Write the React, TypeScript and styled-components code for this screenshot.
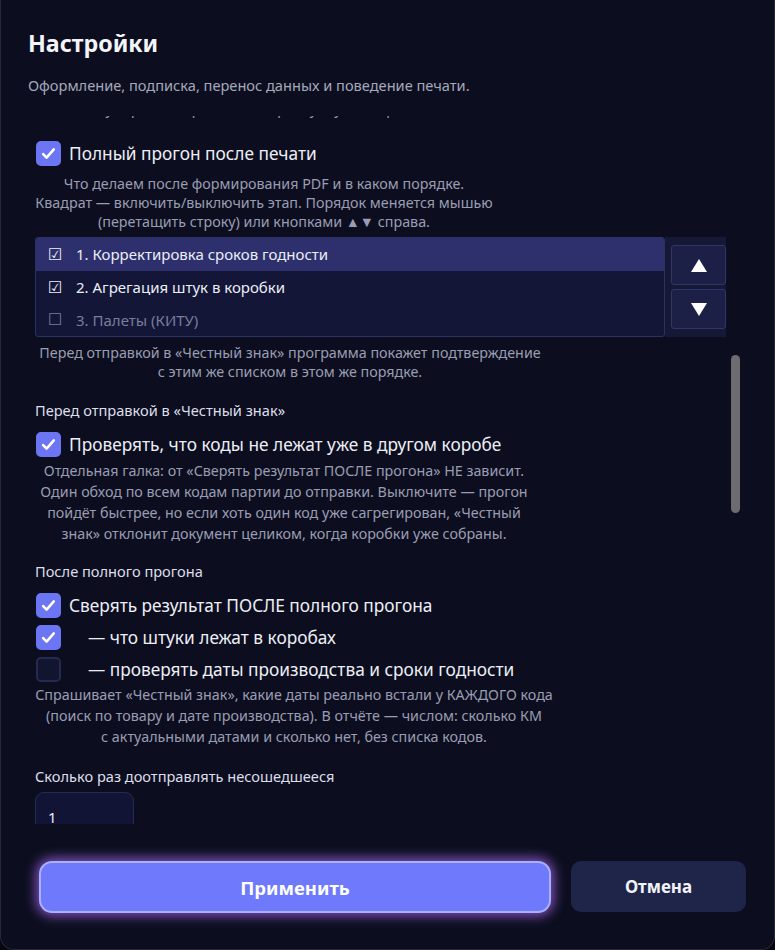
import React, { useLayoutEffect, useRef, useState } from "react";
import styled, { createGlobalStyle } from "styled-components";

const GlobalStyle = createGlobalStyle`
  html, body {
    margin: 0;
    padding: 0;
    background: #07080f;
  }
  * {
    box-sizing: border-box;
  }
`;

const Dialog = styled.div`
  width: 775px;
  height: 950px;
  display: flex;
  flex-direction: column;
  background: #0c0e1f;
  border: 1px solid #252836;
  border-top: none;
  border-radius: 0 0 14px 14px;
  font-family: "Noto Sans", "Open Sans", sans-serif;
  color: #e8eaf3;
`;

const Header = styled.div`
  padding: 27px 28px 0 27px;
`;

const Title = styled.h2`
  margin: 0;
  font-size: 23.2px;
  font-weight: 700;
  line-height: 32px;
  color: #f4f5fb;
`;

const Subtitle = styled.p`
  margin: 16px 0 0;
  font-size: 14.6px;
  line-height: 20px;
  color: #a5a8bb;
`;

const ScrollWrap = styled.div`
  position: relative;
  margin: 21px 33px 0 26px;
  flex: 1;
  min-height: 0;
`;

const Scroll = styled.div`
  height: 100%;
  overflow-y: auto;
  scrollbar-width: none;
  &::-webkit-scrollbar {
    display: none;
  }
`;

const Thumb = styled.div`
  position: absolute;
  right: 1px;
  width: 9px;
  border-radius: 5px;
  background: #6c6c70;
`;

const Content = styled.div`
  min-height: 3164px;
  padding: 0 15px 0 8px;
`;

const Earlier = styled.div`
  min-height: 1070px;
  display: flex;
  flex-direction: column;
  justify-content: flex-end;
  gap: 14px;
`;

const Section = styled.section<{ $top?: number }>`
  display: flex;
  flex-direction: column;
  margin-top: ${(p) => p.$top ?? 0}px;
`;

const SectionTitle = styled.div<{ $top?: number }>`
  margin-top: ${(p) => p.$top ?? 0}px;
  font-size: 14.6px;
  line-height: 20px;
  color: #dcdeea;
`;

const CheckRow = styled.label<{ $top?: number }>`
  display: flex;
  align-items: center;
  gap: 8px;
  margin-top: ${(p) => p.$top ?? 0}px;
  height: 26px;
  font-size: 17.3px;
  color: #eceef6;
  cursor: pointer;
`;

const Box = styled.span<{ $on: boolean }>`
  flex: none;
  width: 25px;
  height: 25px;
  margin-left: 1px;
  border-radius: 5px;
  display: flex;
  align-items: center;
  justify-content: center;
  background: ${(p) => (p.$on ? "#6c75f4" : "#121530")};
  border: 2px solid ${(p) => (p.$on ? "#6c75f4" : "#262a50")};
`;

const Indent = styled.span`
  padding-left: 19px;
`;

const Hint = styled.p<{ $lh: number; $top: number; $w: number }>`
  margin: ${(p) => p.$top}px 0 0;
  max-width: ${(p) => p.$w}px;
  font-size: 14.3px;
  line-height: ${(p) => p.$lh}px;
  color: #9a9db2;
  text-align: center;
`;

const Fragment = styled.p`
  margin: 0;
  font-size: 14px;
  line-height: 20px;
  color: #9a9db2;
  padding-left: 60px;
`;

const StepsFrame = styled.div`
  margin-top: 6px;
  display: flex;
  height: 100px;
`;

const StepsList = styled.div`
  flex: 1;
  display: flex;
  flex-direction: column;
  background: #131636;
  border: 1.5px solid #2c3164;
  border-radius: 3px;
  overflow: hidden;
`;

const StepRow = styled.div<{ $selected?: boolean; $off?: boolean }>`
  height: 33px;
  display: flex;
  align-items: center;
  gap: 14px;
  padding-left: 12px;
  background: ${(p) => (p.$selected ? "#2d306d" : "transparent")};
  color: ${(p) => (p.$off ? "#7a7d9c" : "#eceef8")};
  font-size: 15px;
`;

const StepMark = styled.span`
  font-family: "DejaVu Sans", sans-serif;
  font-size: 16px;
  width: 14px;
`;

const Side = styled.div`
  width: 61px;
  background: #161936;
  padding: 8px 0 0 6px;
  display: flex;
  flex-direction: column;
  gap: 4px;
`;

const MoveButton = styled.button`
  width: 55px;
  height: 40px;
  padding: 0;
  border: 1.5px solid #30366a;
  border-radius: 3px;
  background: #1c2046;
  display: flex;
  align-items: center;
  justify-content: center;
`;

const NumberBox = styled.div`
  margin-top: 6px;
  width: 99px;
  height: 58px;
  border: 1.5px solid #262b55;
  border-radius: 9px;
  background: #111435;
  padding: 14px 12px;
  font-size: 15px;
  color: #eceef8;
`;

const Footer = styled.div`
  display: flex;
  gap: 20px;
  padding: 37px 28px 36px 38px;
`;

const ApplyButton = styled.button`
  flex: 1;
  height: 52px;
  border-radius: 13px;
  border: 2px solid #a9b0ff;
  background: #6e79fc;
  color: #fff;
  font-family: "Noto Sans", sans-serif;
  font-size: 18.5px;
  font-weight: 700;
  box-shadow: 0 0 12px 3px rgba(180, 110, 255, 0.7);
`;

const CancelButton = styled.button`
  width: 175px;
  height: 51px;
  border-radius: 10px;
  border: none;
  background: #1f2548;
  color: #f2f3fa;
  font-family: "Noto Sans", sans-serif;
  font-size: 17px;
  font-weight: 700;
`;

function Check({ on }: { on: boolean }) {
  return (
    <Box $on={on}>
      {on && (
        <svg width="17" height="17" viewBox="0 0 16 16">
          <path d="M3 8.5l3.2 3.3L13 4.2" fill="none" stroke="#fff" strokeWidth="2.4" strokeLinecap="round" strokeLinejoin="round" />
        </svg>
      )}
    </Box>
  );
}

function Arrow({ up }: { up: boolean }) {
  return (
    <svg width="16" height="13" viewBox="0 0 16 13">
      <path d={up ? "M8 0L16 13H0z" : "M0 0H16L8 13z"} fill="#fff" />
    </svg>
  );
}

const steps = [
  { n: 1, text: "Корректировка сроков годности", on: true },
  { n: 2, text: "Агрегация штук в коробки", on: true },
  { n: 3, text: "Палеты (КИТУ)", on: false },
];

export default function App() {
  const scrollRef = useRef<HTMLDivElement>(null);
  const anchorRef = useRef<HTMLDivElement>(null);
  const [thumb, setThumb] = useState({ top: 0, height: 0 });

  const updateThumb = () => {
    const s = scrollRef.current;
    if (!s) return;
    const ratio = s.clientHeight / s.scrollHeight;
    setThumb({ top: s.scrollTop * ratio, height: s.clientHeight * ratio });
  };

  useLayoutEffect(() => {
    const s = scrollRef.current;
    const a = anchorRef.current;
    if (s && a) s.scrollTop = a.offsetTop - s.offsetTop - 24;
    updateThumb();
  }, []);

  return (
    <>
      <GlobalStyle />
      <Dialog>
        <Header>
          <Title>Настройки</Title>
          <Subtitle>Оформление, подписка, перенос данных и поведение печати.</Subtitle>
        </Header>
        <ScrollWrap>
          <Scroll ref={scrollRef} onScroll={updateThumb}>
            <Content>
              <Earlier>
                <SectionTitle>Поведение печати</SectionTitle>
                <Fragment>Нумерация коробок: по порядку, с учётом ранее напечатанных</Fragment>
              </Earlier>
              <Section ref={anchorRef} $top={21}>
                <CheckRow>
                  <Check on />
                  Полный прогон после печати
                </CheckRow>
                <Hint $lh={19} $top={8} $w={458}>
                  Что делаем после формирования PDF и в каком порядке.
                  <br />
                  Квадрат — включить/выключить этап. Порядок меняется мышью
                  <br />
                  (перетащить строку) или кнопками ▲▼ справа.
                </Hint>
                <StepsFrame>
                  <StepsList>
                    {steps.map((s) => (
                      <StepRow key={s.n} $selected={s.n === 1} $off={!s.on}>
                        <StepMark>{s.on ? "☑" : "☐"}</StepMark>
                        {s.n}. {s.text}
                      </StepRow>
                    ))}
                  </StepsList>
                  <Side>
                    <MoveButton>
                      <Arrow up />
                    </MoveButton>
                    <MoveButton>
                      <Arrow up={false} />
                    </MoveButton>
                  </Side>
                </StepsFrame>
                <Hint $lh={19} $top={6} $w={510}>
                  Перед отправкой в «Честный знак» программа покажет подтверждение
                  <br />
                  с этим же списком в этом же порядке.
                </Hint>
              </Section>

              <Section>
                <SectionTitle $top={19}>Перед отправкой в «Честный знак»</SectionTitle>
                <CheckRow $top={11}>
                  <Check on />
                  Проверять, что коды не лежат уже в другом коробе
                </CheckRow>
                <Hint $lh={21} $top={3} $w={498}>
                  Отдельная галка: от «Сверять результат ПОСЛЕ прогона» НЕ зависит.
                  <br />
                  Один обход по всем кодам партии до отправки. Выключите — прогон
                  <br />
                  пойдёт быстрее, но если хоть один код уже сагрегирован, «Честный
                  <br />
                  знак» отклонит документ целиком, когда коробки уже собраны.
                </Hint>
              </Section>

              <Section>
                <SectionTitle $top={17}>После полного прогона</SectionTitle>
                <CheckRow $top={11}>
                  <Check on />
                  Сверять результат ПОСЛЕ полного прогона
                </CheckRow>
                <CheckRow $top={6}>
                  <Check on />
                  <Indent>— что штуки лежат в коробах</Indent>
                </CheckRow>
                <CheckRow $top={6}>
                  <Check on={false} />
                  <Indent>— проверять даты производства и сроки годности</Indent>
                </CheckRow>
                <Hint $lh={21} $top={2} $w={518}>
                  Спрашивает «Честный знак», какие даты реально встали у КАЖДОГО кода
                  <br />
                  (поиск по товару и дате производства). В отчёте — числом: сколько КМ
                  <br />
                  с актуальными датами и сколько нет, без списка кодов.
                </Hint>
              </Section>

              <Section>
                <SectionTitle $top={19}>Сколько раз доотправлять несошедшееся</SectionTitle>
                <NumberBox>1</NumberBox>
              </Section>
            </Content>
          </Scroll>
          <Thumb style={{ top: thumb.top, height: thumb.height }} />
        </ScrollWrap>
        <Footer>
          <ApplyButton>Применить</ApplyButton>
          <CancelButton>Отмена</CancelButton>
        </Footer>
      </Dialog>
    </>
  );
}
